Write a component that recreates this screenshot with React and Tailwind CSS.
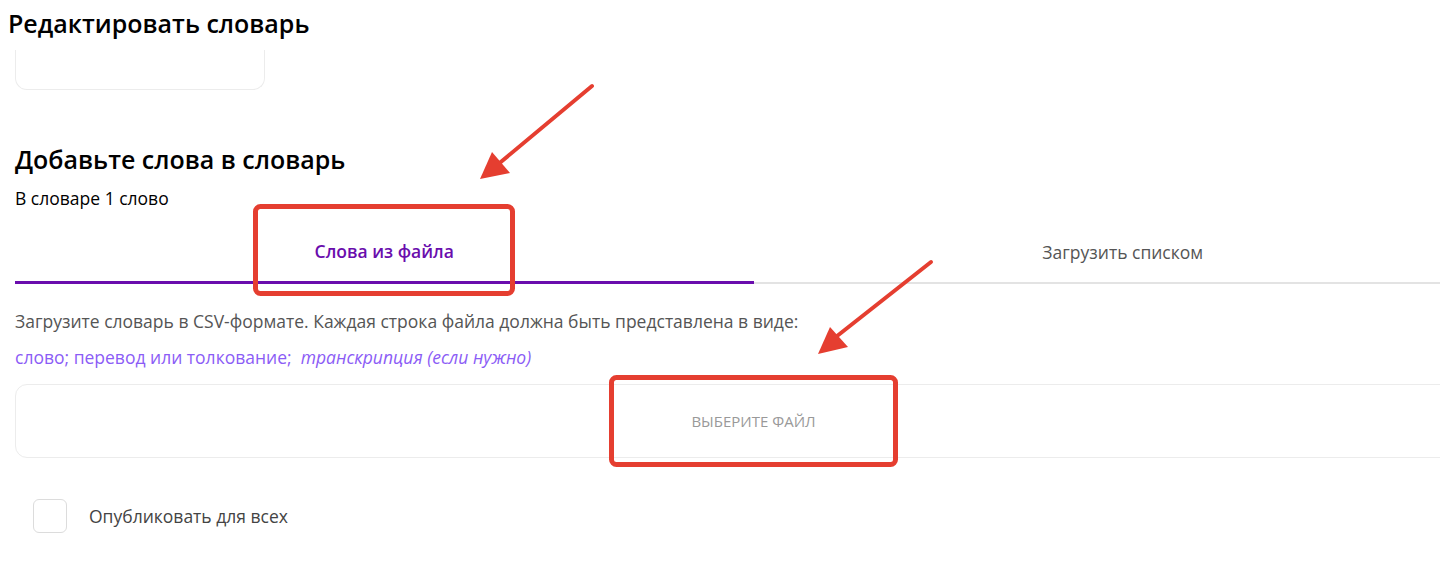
import { useState } from "react";

const Annotations = () => (
  <svg
    className="pointer-events-none absolute left-0 top-0"
    width="1440"
    height="565"
    viewBox="0 0 1440 565"
  >
    <g fill="none" stroke="#e53e30" strokeWidth="5">
      <rect x="255.5" y="206.5" width="257" height="87" rx="5" />
      <rect x="611.5" y="377.5" width="284" height="87" rx="5" />
    </g>
    <g stroke="#e53e30" strokeWidth="4" strokeLinecap="round">
      <line x1="592" y1="86" x2="496" y2="166" />
      <line x1="931" y1="262" x2="832" y2="340" />
    </g>
    <g fill="#e53e30">
      <polygon points="480,179 492,152 510,173" />
      <polygon points="818,354 830,327 848,347" />
    </g>
  </svg>
);

export default function App() {
  const [tab, setTab] = useState("file");
  const [isPublic, setIsPublic] = useState(false);

  return (
    <div
      className="relative h-[565px] w-[1440px] overflow-hidden bg-white"
      style={{ fontFamily: "'Open Sans', 'Noto Sans', sans-serif" }}
    >
      <h1 className="pl-2 pt-2 text-[25px] font-semibold leading-[30px] text-black">
        Редактировать словарь
      </h1>

      <div className="ml-[15px] mt-3 h-10 w-[250px] rounded-b-xl border border-t-0 border-[#ececec]" />

      <div className="ml-[15px] w-[1477px]">
        <h2 className="mt-[54px] text-[25px] font-semibold leading-[30px] text-black">
          Добавьте слова в словарь
        </h2>
        <p className="mt-[14px] text-[17.5px] leading-5 text-black">В словаре 1 слово</p>

        <div className="mt-[14px] flex items-end">
          <button
            onClick={() => setTab("file")}
            className={`flex h-[62px] flex-1 items-center justify-center text-[17.5px] ${
              tab === "file"
                ? "border-b-[3px] border-[#6a0dad] font-semibold text-[#6a0dad]"
                : "border-b-2 border-[#e3e3e3] text-[#555]"
            }`}
          >
            Слова из файла
          </button>
          <button
            onClick={() => setTab("list")}
            className={`flex h-[62px] flex-1 items-center justify-center text-[17.5px] ${
              tab === "list"
                ? "border-b-[3px] border-[#6a0dad] font-semibold text-[#6a0dad]"
                : "border-b-2 border-[#e3e3e3] text-[#555]"
            }`}
          >
            Загрузить списком
          </button>
        </div>

        <p className="mt-[27px] text-[17.5px] leading-5 text-[#555]">
          Загрузите словарь в CSV-формате. Каждая строка файла должна быть представлена в виде:
        </p>
        <p className="mt-[16px] text-[17.5px] leading-5 text-[#8b5cf6]">
          слово; перевод или толкование;&nbsp; <i>транскрипция (если нужно)</i>
        </p>

        <label className="mt-[17px] flex h-[74px] cursor-pointer items-center justify-center rounded-xl border border-[#ececec] text-[15px] uppercase text-[#999]">
          Выберите файл
          <input type="file" accept=".csv" className="hidden" />
        </label>

        <label className="ml-[18px] mt-[41px] flex cursor-pointer items-center gap-[22px]">
          <input
            type="checkbox"
            checked={isPublic}
            onChange={(e) => setIsPublic(e.target.checked)}
            className="h-[34px] w-[34px] appearance-none rounded-md border border-[#dcdcdc] bg-white checked:bg-[#6a0dad]"
          />
          <span className="text-[17.5px] text-[#444]">Опубликовать для всех</span>
        </label>
      </div>

      <Annotations />
    </div>
  );
}
